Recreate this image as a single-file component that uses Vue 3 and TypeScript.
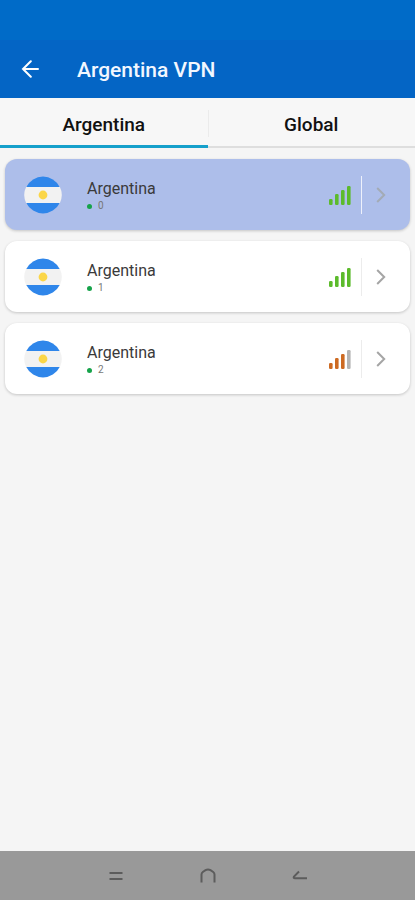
<script setup lang="ts">
import { ref } from 'vue'

interface Server {
  id: number
  country: string
  strength: number
}

const tabs: string[] = ['Argentina', 'Global']
const activeTab = ref<string>('Argentina')
const selected = ref<number>(0)

const servers: Server[] = [
  { id: 0, country: 'Argentina', strength: 4 },
  { id: 1, country: 'Argentina', strength: 4 },
  { id: 2, country: 'Argentina', strength: 3 },
]

const bars = [
  { x: 0, h: 6 },
  { x: 6, h: 11 },
  { x: 12, h: 15 },
  { x: 18, h: 19 },
]

function barColor(index: number, strength: number): string {
  if (index >= strength) return '#b4b4b4'
  return strength === 4 ? '#5cbb2c' : '#cd6a22'
}
</script>

<template>
  <div class="screen">
    <header class="top">
      <div class="status"></div>
      <div class="appbar">
        <button class="back" type="button" aria-label="Back">
          <svg width="18" height="18" viewBox="0 0 18 18" fill="none" stroke="#fff" stroke-width="2" stroke-linecap="round">
            <path d="M17 9H2M9.800 1.200L2 9L9.800 16.800" />
          </svg>
        </button>
        <h1 class="title">Argentina VPN</h1>
      </div>
    </header>

    <div class="tabs" role="tablist">
      <button
        v-for="tab in tabs"
        :key="tab"
        class="tab"
        :class="{ active: tab === activeTab }"
        type="button"
        role="tab"
        :aria-selected="tab === activeTab"
        @click="activeTab = tab"
      >
        {{ tab }}
      </button>
    </div>

    <main class="list">
      <button
        v-for="server in servers"
        :key="server.id"
        class="card"
        :class="{ selected: server.id === selected }"
        type="button"
        @click="selected = server.id"
      >
        <svg class="flag" width="38" height="38" viewBox="0 0 38 38">
          <path d="M2.300 10.500H35.700A19 19 0 0 1 35.700 27.500H2.300A19 19 0 0 1 2.300 10.500Z" fill="#f2f2f2" />
          <path d="M2.300 11A18.600 18.600 0 0 1 35.700 11Z" fill="#2f86ea" />
          <path d="M2.300 27A18.600 18.600 0 0 0 35.700 27Z" fill="#2f86ea" />
          <circle cx="19" cy="19" r="4.400" fill="#fbd648" />
        </svg>
        <span class="info">
          <span class="name">{{ server.country }}</span>
          <span class="meta"><span class="dot"></span>{{ server.id }}</span>
        </span>
        <svg class="signal" width="22" height="20" viewBox="0 0 22 20">
          <rect
            v-for="(bar, i) in bars"
            :key="i"
            :x="bar.x"
            :y="20 - bar.h"
            width="3.600"
            :height="bar.h"
            rx="1.200"
            :fill="barColor(i, server.strength)"
          />
        </svg>
        <span class="divider"></span>
        <svg class="chevron" width="10" height="16" viewBox="0 0 10 16" fill="none" stroke-width="2">
          <path d="M1.200 1L8.200 8L1.200 15" />
        </svg>
      </button>
    </main>

    <nav class="sysnav">
      <button type="button" aria-label="Recent apps">
        <svg width="16" height="16" viewBox="0 0 16 16" fill="none" stroke="#5c5c5c" stroke-width="2">
          <path d="M1.500 5H14.500M1.500 11H14.500" />
        </svg>
      </button>
      <button type="button" aria-label="Home">
        <svg width="16" height="16" viewBox="0 0 16 16" fill="none" stroke="#5c5c5c" stroke-width="2">
          <path d="M1.500 14.500V6.500Q1.500 5 2.800 4L5.500 2.200Q8 .8 10.500 2.200L13.200 4Q14.500 5 14.500 6.500V14.500" />
        </svg>
      </button>
      <button type="button" aria-label="System back">
        <svg width="16" height="16" viewBox="0 0 16 16" fill="none" stroke="#5c5c5c" stroke-width="2">
          <path d="M15 10.200H3Q1 10.200 2 8.500L7 3.500" />
        </svg>
      </button>
    </nav>
  </div>
</template>

<style>
body {
  margin: 0;
  background: #f5f5f5;
}
</style>

<style scoped>
.screen {
  display: flex;
  flex-direction: column;
  min-height: 100vh;
  background: #f5f5f5;
  font-family: Roboto, "Liberation Sans", sans-serif;
}

button {
  margin: 0;
  padding: 0;
  border: 0;
  background: none;
  font: inherit;
  color: inherit;
}

.top {
  background: #0465c5;
}

.status {
  height: 40px;
  background: #006bc8;
}

.appbar {
  display: flex;
  align-items: center;
  height: 58px;
  padding-left: 21px;
}

.back {
  display: flex;
  margin-right: 38px;
}

.title {
  margin: 0;
  padding-top: 2px;
  color: #f2f7ff;
  font-size: 21px;
  font-weight: 500;
  line-height: 28px;
}

.tabs {
  display: flex;
  height: 50px;
  background: #f7f7f7;
}

.tab {
  position: relative;
  flex: 1;
  padding-top: 6px;
  border-bottom: 2px solid #dedede;
  color: #111;
  font-size: 19px;
  font-weight: 500;
  line-height: 24px;
}

.tab.active {
  padding-top: 7px;
  border-bottom: 3px solid #16a0cb;
}

.tab + .tab::before {
  content: "";
  position: absolute;
  top: 12px;
  bottom: 9px;
  left: 0;
  width: 1px;
  background: #ebebeb;
}

.list {
  display: flex;
  flex: 1;
  flex-direction: column;
  gap: 11px;
  padding: 11px 5px;
}

.card {
  display: flex;
  align-items: center;
  height: 71px;
  padding: 0 24px 0 19px;
  border-radius: 12px;
  background: #fff;
  box-shadow: 0 1px 3px rgba(0, 0, 0, 0.2);
  text-align: left;
}

.card.selected {
  background: #adbeea;
}

.flag {
  flex: none;
}

.info {
  display: flex;
  flex: 1;
  flex-direction: column;
  padding-top: 3px;
  margin-left: 25px;
}

.name {
  color: #3a3a3a;
  font-size: 16px;
  line-height: 20px;
}

.meta {
  display: flex;
  align-items: center;
  gap: 6px;
  color: #777;
  font-size: 10px;
  line-height: 14px;
}

.dot {
  width: 5px;
  height: 5px;
  border-radius: 50%;
  background: #16a34a;
}

.divider {
  width: 1px;
  height: 38px;
  margin: 0 14px 0 10px;
  background: #ececec;
}

.selected .divider {
  background: #eef1fb;
}

.chevron {
  stroke: #a5a5a5;
}

.selected .chevron {
  stroke: #a3abb5;
}

.sysnav {
  display: flex;
  align-items: center;
  justify-content: center;
  gap: 76px;
  height: 49px;
  background: #999;
}

.sysnav button {
  display: flex;
}
</style>
